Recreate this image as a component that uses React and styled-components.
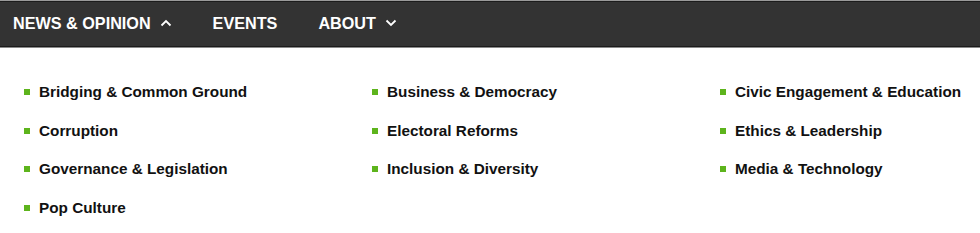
import React from 'react'
import styled, { createGlobalStyle } from 'styled-components'

const Global = createGlobalStyle`
  body {
    margin: 0;
    background: #fff;
    font-family: "Liberation Sans", Arial, sans-serif;
  }
`

const Nav = styled.nav`
  height: 46px;
  background: #333;
  border-top: 1px solid #9a9a9a;
  border-bottom: 1px solid #8a8a8a;
  box-shadow: inset 0 1px 0 #1c1c1c, inset 0 -1px 0 #1c1c1c;
  display: flex;
  align-items: center;
  padding: 0 0 2px 13px;
  gap: 41px;
  box-sizing: border-box;
  height: 48px;
`

const NavItem = styled.div`
  display: flex;
  align-items: center;
  gap: 9px;
  color: #fff;
  font-size: 16.2px;
  font-weight: 700;
  text-transform: uppercase;
`

const Panel = styled.div`
  display: grid;
  grid-template-columns: 348px 348px 1fr;
  grid-auto-rows: 38.5px;
  padding: 25px 0 0 24px;
`

const Item = styled.div`
  display: flex;
  align-items: center;
  gap: 9px;
  font-size: 15.3px;
  font-weight: 700;
  color: #111;
  white-space: nowrap;
`

const Bullet = styled.span`
  width: 6px;
  height: 6px;
  background: #5db41c;
  flex: none;
`

const Chevron = ({ up }) => (
  <svg width="12" height="8" viewBox="0 0 12 8" fill="none">
    <path
      d={up ? 'M1.5 6.5 L6 2 L10.5 6.5' : 'M1.5 1.5 L6 6 L10.5 1.5'}
      stroke="#fff"
      strokeWidth="1.8"
    />
  </svg>
)

const topics = [
  'Bridging & Common Ground',
  'Business & Democracy',
  'Civic Engagement & Education',
  'Corruption',
  'Electoral Reforms',
  'Ethics & Leadership',
  'Governance & Legislation',
  'Inclusion & Diversity',
  'Media & Technology',
  'Pop Culture',
]

const App = () => {
  return (
    <>
      <Global />
      <Nav>
        <NavItem>News & Opinion <Chevron up /></NavItem>
        <NavItem>Events</NavItem>
        <NavItem>About <Chevron /></NavItem>
      </Nav>
      <Panel>
        {topics.map((t) => (
          <Item key={t}>
            <Bullet />
            {t}
          </Item>
        ))}
      </Panel>
    </>
  )
}

export default App
